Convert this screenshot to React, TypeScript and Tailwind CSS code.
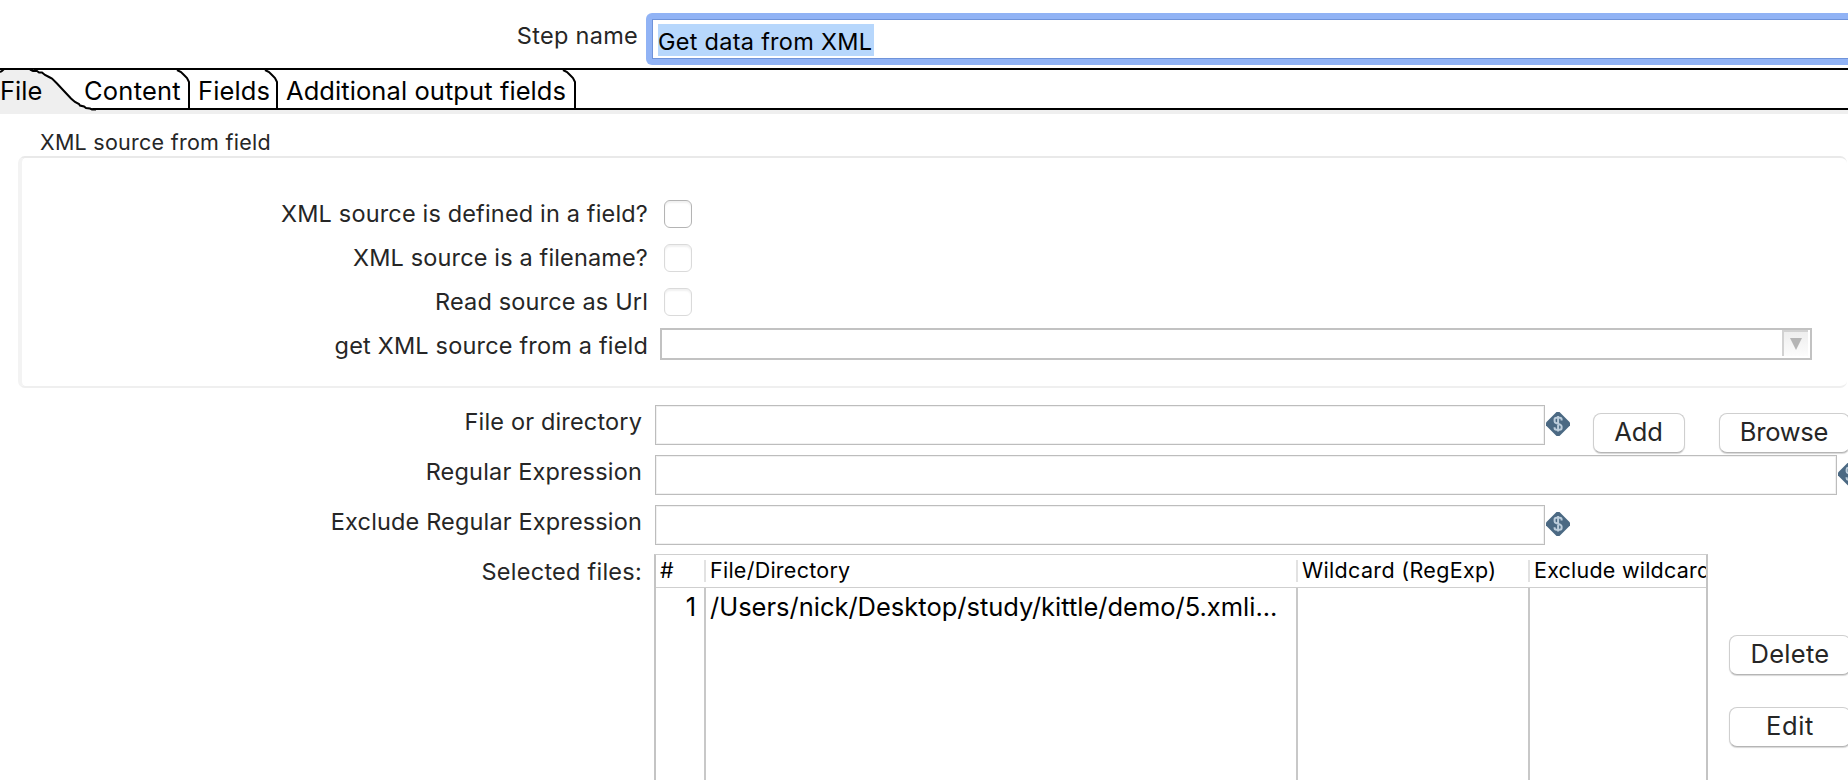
import React from "react";

function VariableIcon({ className = "" }: { className?: string }) {
  return (
    <svg width="24" height="24" viewBox="0 0 24 24" className={`block shrink-0 ${className}`}>
      <path d="M10.5 0h3L24 10.5v3L13.5 24h-3L0 13.5v-3z" fill="#4b6983" />
      <path
        d="M15.6 8.4V7.6Q15.6 5.8 13.8 5.8H10.4Q8.6 5.8 8.6 7.6V9.2Q8.6 10.5 10 11L14.2 12.6Q15.6 13.2 15.6 14.6V16Q15.6 17.8 13.8 17.8H10.4Q8.6 17.8 8.6 16V15.2M12.1 4V19.6"
        fill="none"
        stroke="#bccddb"
        strokeWidth="2"
      />
    </svg>
  );
}

function Tab({ label, className }: { label: string; className: string }) {
  return (
    <div className={`relative h-10 shrink-0 text-[25.5px] leading-[41px] text-black ${className}`}>
      {label}
      <svg width="14" height="40" viewBox="0 0 14 40" className="absolute top-0 right-0">
        <path d="M1 0L5 2L8 5L11 8L13 12V40" fill="none" stroke="#000" strokeWidth="2" />
      </svg>
    </div>
  );
}

function Checkbox({ enabled }: { enabled?: boolean }) {
  return (
    <span
      className={`ml-[16px] block size-7 rounded-[6px] border bg-white shadow-[inset_0_2px_2px_rgba(0,0,0,0.06)] ${
        enabled ? "border-[#b4b4b4]" : "border-[#dadada]"
      }`}
    />
  );
}

function SourceRow({ label, tracking, children }: { label: string; tracking: string; children: React.ReactNode }) {
  return (
    <div className="flex h-11 items-center">
      <div className={`w-[626px] shrink-0 text-right text-[23.5px] leading-7 whitespace-nowrap ${tracking}`}>{label}</div>
      {children}
    </div>
  );
}

function FormRow({ label, tracking, input, children }: { label: string; tracking: string; input: string; children: React.ReactNode }) {
  return (
    <div className="flex h-[50px] items-start">
      <div className={`w-[642px] shrink-0 text-right text-[23.5px] leading-[33px] whitespace-nowrap ${tracking}`}>{label}</div>
      <div className={`ml-[13px] h-10 shrink-0 border border-[#bdbdbd] bg-white shadow-[inset_0_0_0_1px_#f1f1f1] ${input}`} />
      {children}
    </div>
  );
}

function Button({ label, className }: { label: string; className: string }) {
  return (
    <button
      className={`block h-10 shrink-0 rounded-[8px] border border-[#cfcfcf] border-b-[#b5b5b5] bg-white pb-[3px] text-center text-[25.5px] leading-[35px] whitespace-nowrap shadow-[0_1px_1px_rgba(0,0,0,0.16)] ${className}`}
    >
      {label}
    </button>
  );
}

function HeaderCell({ label, className }: { label: string; className: string }) {
  return (
    <div className={`h-8 shrink-0 overflow-hidden text-[21.5px] leading-[30px] whitespace-nowrap ${className}`}>
      {label}
    </div>
  );
}

function Divider() {
  return (
    <div className="flex w-[2px] shrink-0 flex-col">
      <div className="mt-[5px] h-[22px] bg-[#e2e2e2]" />
      <div className="mt-[6px] flex-1 bg-[#c8c8c8]" />
    </div>
  );
}

export default function App() {
  return (
    <div className="flex h-[780px] w-[1848px] flex-col overflow-hidden bg-white font-['Inter',sans-serif] text-[#262626]">
      <div className="flex h-[68px] shrink-0">
        <div className="mt-[22px] w-[638px] shrink-0 text-right text-[23.5px] leading-7 tracking-[0.29px]">Step name</div>
        <div className="mt-[13px] ml-[8px] h-[52px] w-[1300px] shrink-0 rounded-[6px] bg-[#91b3f5] p-[6px]">
          <div className="h-10 border border-[#6f93d9] bg-white pt-[4px] pl-[5px]">
            <span className="block h-8 w-[216px] bg-[#b7d7fc] text-[23.5px] leading-[35px] tracking-[0.27px] whitespace-nowrap text-black">
              Get data from XML
            </span>
          </div>
        </div>
      </div>

      <div className="flex h-[46px] shrink-0 flex-col bg-[#efefef]">
        <div className="relative flex h-[42px] border-y-2 border-black bg-white">
          <div className="relative z-10 h-10 w-[83px] shrink-0 text-[25.5px] leading-[41px] text-black">
            <svg width="96" height="46" viewBox="0 0 96 46" className="absolute -top-[2px] left-0 -z-10">
              <path d="M0 4L4 1H31L37 3L44 5L51 9L57 15L64 22L72 30L79 35L86 38.5L93 41V46H0z" fill="#efefef" />
              <path d="M0 4L2 3L4 1H33" fill="none" stroke="#000" strokeWidth="2" />
              <path
                d="M30 1.5L33 3H37L39 4.5H42L45 7L49 9L52 10.5L57 15.5L64 23L71 30.5L75 34L79 36L80 37.5L84 38.5L86 40L90 40.5L92 41.5H96"
                fill="none"
                stroke="#000"
                strokeWidth="2"
              />
            </svg>
            File
          </div>
          <Tab label="Content" className="w-[107px] pl-px tracking-[0.22px]" />
          <Tab label="Fields" className="w-[88px] pl-[8px] tracking-[0.1px]" />
          <Tab label="Additional output fields" className="w-[298px] pl-[8px] tracking-[0.08px] whitespace-nowrap" />
        </div>
      </div>

      <div className="h-[42px] shrink-0 pt-[17px] pl-[40px] text-[21.5px] leading-[22px] tracking-[0.26px]">XML source from field</div>
      <div className="ml-[18px] h-[232px] w-[1829px] shrink-0 rounded-[7px] border-t-2 border-b-2 border-l-4 border-t-[#e9e9e9] border-b-[#efefef] border-l-[#f3f3f3] bg-white pt-[34px]">
        <SourceRow label="XML source is defined in a field?" tracking="tracking-[0.16px]">
          <Checkbox enabled />
        </SourceRow>
        <SourceRow label="XML source is a filename?" tracking="tracking-[0.14px]">
          <Checkbox />
        </SourceRow>
        <SourceRow label="Read source as Url" tracking="tracking-[0.16px]">
          <Checkbox />
        </SourceRow>
        <SourceRow label="get XML source from a field" tracking="tracking-[0.18px]">
          <div className="mb-1 ml-[12px] flex h-8 w-[1152px] shrink-0 justify-end border-2 border-[#c2c2c2] bg-white pr-[2px]">
            <div className="flex h-[26px] w-[26px] items-start justify-center border-t-2 border-l-2 border-[#d2d2d2] bg-linear-to-b from-[#eeeeee] to-[#fcfcfc] pt-[6px]">
              <svg width="12" height="12" viewBox="0 0 12 12">
                <path d="M0 0H12L6 12z" fill="#b5b5b5" />
              </svg>
            </div>
          </div>
        </SourceRow>
      </div>

      <div className="mt-[17px] flex shrink-0 flex-col">
        <FormRow label="File or directory" tracking="tracking-[0.16px]" input="w-[890px]">
          <VariableIcon className="mt-[7px] ml-px" />
          <Button label="Add" className="mt-[8px] ml-[23px] w-[92px] pr-[7px] pl-[6px] tracking-[-0.13px]" />
          <Button label="Browse" className="mt-[8px] ml-[34px] w-[131px] pr-px tracking-[-0.23px]" />
        </FormRow>
        <FormRow label="Regular Expression" tracking="tracking-[0.18px]" input="w-[1182px]">
          <VariableIcon className="mt-[7px] ml-px" />
        </FormRow>
        <FormRow label="Exclude Regular Expression" tracking="tracking-[0.15px]" input="w-[890px]">
          <VariableIcon className="mt-[7px] ml-px" />
        </FormRow>
      </div>

      <div className="-mt-px flex h-[226px] shrink-0">
        <div className="mt-px w-[642px] shrink-0 text-right text-[23.5px] leading-[33px] tracking-[0.25px]">Selected files:</div>
        <div className="ml-[12px] flex w-[1054px] shrink-0 overflow-hidden border-x-2 border-t border-x-[#c4c4c4] border-t-[#cfcfcf] bg-[linear-gradient(#cfcfcf,#cfcfcf)] bg-[length:100%_1px] bg-[position:0_32px] bg-no-repeat text-black">
          <div className="w-[48px] shrink-0">
            <HeaderCell label="#" className="pl-[4px]" />
            <div className="pt-px pr-[8px] text-right text-[25.5px] leading-[38px]">1</div>
          </div>
          <Divider />
          <div className="w-[590px] shrink-0">
            <HeaderCell label="File/Directory" className="pl-[4px] tracking-[0.25px]" />
            <div className="pt-px pl-[4px] text-[25.5px] leading-[38px] tracking-[-0.01px] whitespace-nowrap">
              /Users/nick/Desktop/study/kittle/demo/5.xmli...
            </div>
          </div>
          <Divider />
          <div className="w-[230px] shrink-0">
            <HeaderCell label="Wildcard (RegExp)" className="pl-[4px] tracking-[0.33px]" />
          </div>
          <Divider />
          <div className="w-[176px] shrink-0">
            <HeaderCell label="Exclude wildcard" className="pl-[4px] tracking-[0.22px]" />
          </div>
        </div>
        <div className="ml-[21px] flex flex-col gap-8 pt-[81px]">
          <Button label="Delete" className="w-[122px] tracking-[0.3px]" />
          <Button label="Edit" className="w-[122px] tracking-[0.6px]" />
        </div>
      </div>
    </div>
  );
}
